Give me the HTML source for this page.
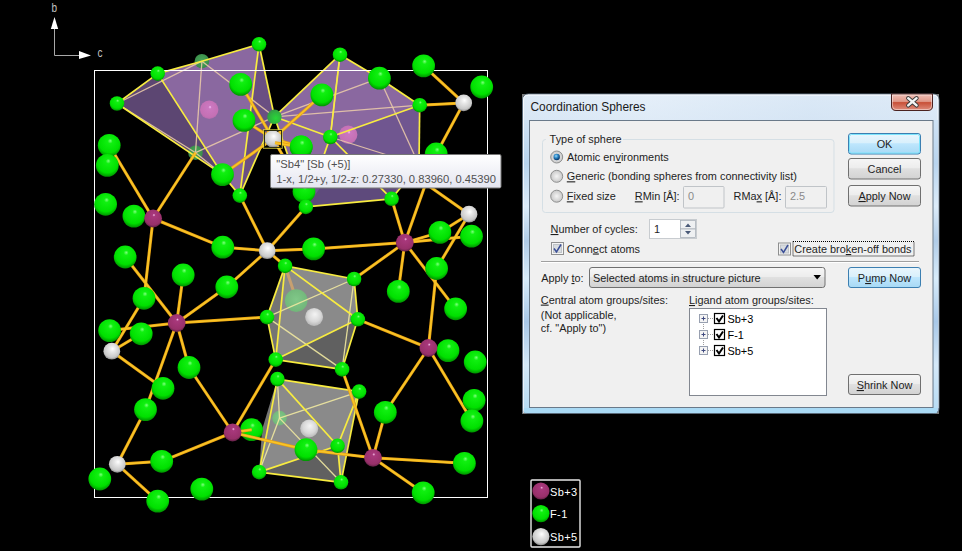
<!DOCTYPE html>
<html><head><meta charset="utf-8">
<style>
html,body{margin:0;padding:0;background:#000;overflow:hidden;width:962px;height:551px}
svg{display:block}
.t{font-family:"Liberation Sans",sans-serif;font-size:10.9px;fill:#1e1e1e}
</style></head><body>
<svg width="962" height="551" viewBox="0 0 962 551">
<defs>

<radialGradient id="gG" cx="0.5" cy="0.4" r="0.6" fx="0.55" fy="0.3">
 <stop offset="0" stop-color="#80ff80"/><stop offset="0.18" stop-color="#10f010"/>
 <stop offset="0.75" stop-color="#00e000"/><stop offset="1" stop-color="#009000"/></radialGradient>
<radialGradient id="gM" cx="0.5" cy="0.4" r="0.6" fx="0.55" fy="0.3">
 <stop offset="0" stop-color="#f8c0e8"/><stop offset="0.14" stop-color="#a8387c"/>
 <stop offset="0.8" stop-color="#98306a"/><stop offset="1" stop-color="#602044"/></radialGradient>
<radialGradient id="gW" cx="0.5" cy="0.4" r="0.6" fx="0.55" fy="0.35">
 <stop offset="0" stop-color="#ffffff"/><stop offset="0.3" stop-color="#e8e8e8"/>
 <stop offset="0.8" stop-color="#c8c8c8"/><stop offset="1" stop-color="#888888"/></radialGradient>
<radialGradient id="gT" cx="0.5" cy="0.45" r="0.6">
 <stop offset="0" stop-color="#48a858"/><stop offset="1" stop-color="#388848"/></radialGradient>
<radialGradient id="gT3" cx="0.6" cy="0.6" r="0.7">
 <stop offset="0" stop-color="#28d838"/><stop offset="0.6" stop-color="#30b040"/><stop offset="1" stop-color="#3a8a48"/></radialGradient>
<radialGradient id="gTG" cx="0.5" cy="0.45" r="0.6">
 <stop offset="0" stop-color="#80c888"/><stop offset="1" stop-color="#70b478"/></radialGradient>
<radialGradient id="gP" cx="0.5" cy="0.45" r="0.6" fx="0.55" fy="0.35">
 <stop offset="0" stop-color="#f8c0f8"/><stop offset="0.15" stop-color="#cc78c0"/><stop offset="0.8" stop-color="#c470b4"/><stop offset="1" stop-color="#a868a8"/></radialGradient>
<radialGradient id="gWI" cx="0.5" cy="0.45" r="0.6" fx="0.55" fy="0.35">
 <stop offset="0" stop-color="#f4f4f4"/><stop offset="0.6" stop-color="#d8d8d8"/><stop offset="1" stop-color="#b0b0b0"/></radialGradient>

<linearGradient id="frame" x1="0" y1="0" x2="0" y2="1">
 <stop offset="0" stop-color="#e6f0fa"/><stop offset="0.1" stop-color="#d4e4f4"/><stop offset="0.5" stop-color="#c6dcf2"/><stop offset="1" stop-color="#b4d2ee"/></linearGradient>
<linearGradient id="titleg" x1="0" y1="0" x2="1" y2="0">
 <stop offset="0" stop-color="#d8e6f4"/><stop offset="0.3" stop-color="#e4eef8"/><stop offset="0.7" stop-color="#d4e4f4"/><stop offset="1" stop-color="#dae8f6"/></linearGradient>
<linearGradient id="closeg" x1="0" y1="0" x2="0" y2="1">
 <stop offset="0" stop-color="#f0c0b8"/><stop offset="0.45" stop-color="#e09888"/><stop offset="0.52" stop-color="#c85038"/><stop offset="1" stop-color="#e09080"/></linearGradient>
<linearGradient id="btng" x1="0" y1="0" x2="0" y2="1">
 <stop offset="0" stop-color="#f6f6f6"/><stop offset="0.45" stop-color="#ededed"/><stop offset="0.5" stop-color="#e0e0e0"/><stop offset="1" stop-color="#d2d2d2"/></linearGradient>
<linearGradient id="btnb" x1="0" y1="0" x2="0" y2="1">
 <stop offset="0" stop-color="#eaf6fd"/><stop offset="0.45" stop-color="#d9f0fc"/><stop offset="0.5" stop-color="#bee6fd"/><stop offset="1" stop-color="#a7d9f5"/></linearGradient>
<linearGradient id="tipg" x1="0" y1="0" x2="0" y2="1">
 <stop offset="0" stop-color="#ffffff"/><stop offset="1" stop-color="#e4e5f0"/></linearGradient>
<linearGradient id="streak" x1="0" y1="0" x2="0" y2="1">
 <stop offset="0" stop-color="#cfe2f4"/><stop offset="0.15" stop-color="#b8d4ee"/><stop offset="0.3" stop-color="#dcecfa"/><stop offset="0.42" stop-color="#b0cce8"/><stop offset="0.55" stop-color="#d8ecfa"/><stop offset="0.7" stop-color="#a8c8e8"/><stop offset="0.85" stop-color="#d4e8f8"/><stop offset="1" stop-color="#b8dcf4"/></linearGradient>
<radialGradient id="radiog" cx="0.5" cy="0.5" r="0.5">
 <stop offset="0" stop-color="#f4f4f4"/><stop offset="1" stop-color="#c8c8c8"/></radialGradient>
<radialGradient id="radiosel" cx="0.4" cy="0.35" r="0.6">
 <stop offset="0" stop-color="#9fd8f8"/><stop offset="0.5" stop-color="#2a88c8"/><stop offset="1" stop-color="#0c3c70"/></radialGradient>
</defs>
<rect width="962" height="551" fill="#000"/>

<line x1="54.5" y1="55.5" x2="54.5" y2="22" stroke="#a8a8a8" stroke-width="1"/>
<line x1="54.5" y1="55.5" x2="84" y2="55.5" stroke="#a8a8a8" stroke-width="1"/>
<polygon points="54.5,17 50.8,29 58.2,29" fill="#ffffff"/>
<polygon points="91,55.5 79,51 79,59" fill="#ffffff"/>
<text x="0" y="0" font-family="Liberation Sans" font-size="12.5" fill="#c0c0c0" transform="translate(51.6,12.2) scale(0.8,1)">b</text>
<text x="0" y="0" font-family="Liberation Sans" font-size="12.5" fill="#c0c0c0" transform="translate(97.6,56.6) scale(0.8,1)">c</text>

<polygon points="117,103.5 157.7,73.6 201.9,61.2 259,44.3 274.4,116.8 239.8,195.6 222.5,174.6" fill="#8a68a0" fill-opacity="1"/><polygon points="117,103.5 157.7,73.6 222.5,174.6" fill="#5c4672" fill-opacity="1"/><polygon points="259,44.3 274.4,116.8 239.8,195.6" fill="#6a4f82" fill-opacity="1"/><polygon points="274.4,116.8 340,54.7 379.4,78.2 419.7,105.2 419,165 391.6,198.8 305.8,206.9" fill="#8a68a0" fill-opacity="1"/><polygon points="330.3,137 419.7,105.2 419,165 391.6,198.8 305.8,206.9" fill="#705690" fill-opacity="1"/><polygon points="305.8,206.9 391.6,198.8 400,182 330,175" fill="#5e4a7c" fill-opacity="1"/><polygon points="285.1,265.9 354.1,279 357.8,319.3 342.1,369.4 275.7,359.6 267,317.1" fill="#8a8a8a" fill-opacity="1"/><polygon points="275.7,359.6 342.1,369.4 357.8,319.3" fill="#606060" fill-opacity="1"/><polygon points="285.1,265.9 267,317.1 275.7,359.6" fill="#747474" fill-opacity="1"/><polygon points="277.4,379.1 359.1,391.6 341,482.3 259.1,472.1" fill="#8a8a8a" fill-opacity="1"/><polygon points="259.1,472.1 341,482.3 337.6,445.8" fill="#606060" fill-opacity="1"/><polygon points="277.4,379.1 259.1,472.1 262,430" fill="#747474" fill-opacity="1"/><circle cx="209.2" cy="109.7" r="9.2" fill="url(#gP)"/><circle cx="348.2" cy="134.8" r="9.2" fill="url(#gP)"/><circle cx="314.1" cy="316.9" r="9" fill="url(#gWI)"/><circle cx="309.2" cy="428.5" r="9" fill="url(#gWI)"/><line x1="285.1" y1="265.9" x2="296.4" y2="299.7" stroke="#c8a070" stroke-width="3" stroke-opacity="1"/><circle cx="201.9" cy="61.2" r="7.3" fill="url(#gT)"/><circle cx="195.5" cy="152.7" r="7.3" fill="url(#gT)"/><circle cx="296.2" cy="300.6" r="11.3" fill="url(#gTG)"/><circle cx="279.5" cy="418.1" r="7.3" fill="url(#gTG)"/><line x1="117" y1="103.5" x2="201.9" y2="61.2" stroke="#e8c8a8" stroke-width="1.3" stroke-opacity="0.9"/><line x1="201.9" y1="61.2" x2="195.5" y2="152.7" stroke="#e8c8a8" stroke-width="1.3" stroke-opacity="0.9"/><line x1="201.9" y1="61.2" x2="274.4" y2="116.8" stroke="#e8c8a8" stroke-width="1.3" stroke-opacity="0.9"/><line x1="195.5" y1="152.7" x2="274.4" y2="116.8" stroke="#e8c8a8" stroke-width="1.3" stroke-opacity="0.9"/><line x1="195.5" y1="152.7" x2="222.5" y2="174.6" stroke="#e8c8a8" stroke-width="1.3" stroke-opacity="0.9"/><line x1="117" y1="103.5" x2="195.5" y2="152.7" stroke="#e8c8a8" stroke-width="1.3" stroke-opacity="0.9"/><line x1="117" y1="103.5" x2="157.7" y2="73.6" stroke="#f8ec40" stroke-width="1.7" stroke-opacity="1"/><line x1="157.7" y1="73.6" x2="201.9" y2="61.2" stroke="#f8ec40" stroke-width="1.7" stroke-opacity="1"/><line x1="201.9" y1="61.2" x2="259" y2="44.3" stroke="#f8ec40" stroke-width="1.7" stroke-opacity="1"/><line x1="157.7" y1="73.6" x2="222.5" y2="174.6" stroke="#f8ec40" stroke-width="1.7" stroke-opacity="1"/><line x1="117" y1="103.5" x2="222.5" y2="174.6" stroke="#f8ec40" stroke-width="1.7" stroke-opacity="1"/><line x1="259" y1="44.3" x2="274.4" y2="116.8" stroke="#f8ec40" stroke-width="1.7" stroke-opacity="1"/><line x1="259" y1="44.3" x2="239.8" y2="195.6" stroke="#f8ec40" stroke-width="1.7" stroke-opacity="1"/><line x1="222.5" y1="174.6" x2="239.8" y2="195.6" stroke="#f8ec40" stroke-width="1.7" stroke-opacity="1"/><line x1="274.4" y1="116.8" x2="239.8" y2="195.6" stroke="#f8ec40" stroke-width="1.7" stroke-opacity="1"/><line x1="274.4" y1="116.8" x2="379.4" y2="78.2" stroke="#e8c8a8" stroke-width="1.3" stroke-opacity="0.9"/><line x1="340" y1="54.7" x2="330.3" y2="137" stroke="#e8c8a8" stroke-width="1.3" stroke-opacity="0.9"/><line x1="330.3" y1="137" x2="419" y2="165" stroke="#e8c8a8" stroke-width="1.3" stroke-opacity="0.9"/><line x1="379.4" y1="78.2" x2="419" y2="165" stroke="#e8c8a8" stroke-width="1.3" stroke-opacity="0.9"/><line x1="274.4" y1="116.8" x2="419.7" y2="105.2" stroke="#e8c8a8" stroke-width="1.3" stroke-opacity="0.9"/><line x1="274.4" y1="116.8" x2="340" y2="54.7" stroke="#f8ec40" stroke-width="1.7" stroke-opacity="1"/><line x1="340" y1="54.7" x2="379.4" y2="78.2" stroke="#f8ec40" stroke-width="1.7" stroke-opacity="1"/><line x1="379.4" y1="78.2" x2="419.7" y2="105.2" stroke="#f8ec40" stroke-width="1.7" stroke-opacity="1"/><line x1="419.7" y1="105.2" x2="419" y2="165" stroke="#f8ec40" stroke-width="1.7" stroke-opacity="1"/><line x1="419" y1="165" x2="391.6" y2="198.8" stroke="#f8ec40" stroke-width="1.7" stroke-opacity="1"/><line x1="391.6" y1="198.8" x2="305.8" y2="206.9" stroke="#f8ec40" stroke-width="1.7" stroke-opacity="1"/><line x1="305.8" y1="206.9" x2="274.4" y2="116.8" stroke="#f8ec40" stroke-width="1.7" stroke-opacity="1"/><line x1="330.3" y1="137" x2="274.4" y2="116.8" stroke="#f8ec40" stroke-width="1.7" stroke-opacity="1"/><line x1="330.3" y1="137" x2="419.7" y2="105.2" stroke="#f8ec40" stroke-width="1.7" stroke-opacity="1"/><line x1="330.3" y1="137" x2="305.8" y2="206.9" stroke="#f8ec40" stroke-width="1.7" stroke-opacity="1"/><line x1="330.3" y1="137" x2="391.6" y2="198.8" stroke="#f8ec40" stroke-width="1.7" stroke-opacity="1"/><line x1="340" y1="54.7" x2="330.3" y2="137" stroke="#f8ec40" stroke-width="1.7" stroke-opacity="1"/><line x1="267" y1="317.1" x2="354.1" y2="279" stroke="#f0e8a0" stroke-width="1.3" stroke-opacity="0.9"/><line x1="267" y1="317.1" x2="342.1" y2="369.4" stroke="#f0e8a0" stroke-width="1.3" stroke-opacity="0.9"/><line x1="354.1" y1="279" x2="342.1" y2="369.4" stroke="#f0e8a0" stroke-width="1.3" stroke-opacity="0.9"/><line x1="285.1" y1="265.9" x2="354.1" y2="279" stroke="#f8ec40" stroke-width="1.7" stroke-opacity="1"/><line x1="354.1" y1="279" x2="357.8" y2="319.3" stroke="#f8ec40" stroke-width="1.7" stroke-opacity="1"/><line x1="357.8" y1="319.3" x2="342.1" y2="369.4" stroke="#f8ec40" stroke-width="1.7" stroke-opacity="1"/><line x1="342.1" y1="369.4" x2="275.7" y2="359.6" stroke="#f8ec40" stroke-width="1.7" stroke-opacity="1"/><line x1="275.7" y1="359.6" x2="267" y2="317.1" stroke="#f8ec40" stroke-width="1.7" stroke-opacity="1"/><line x1="267" y1="317.1" x2="285.1" y2="265.9" stroke="#f8ec40" stroke-width="1.7" stroke-opacity="1"/><line x1="285.1" y1="265.9" x2="357.8" y2="319.3" stroke="#f8ec40" stroke-width="1.7" stroke-opacity="1"/><line x1="357.8" y1="319.3" x2="275.7" y2="359.6" stroke="#f8ec40" stroke-width="1.7" stroke-opacity="1"/><line x1="285.1" y1="265.9" x2="275.7" y2="359.6" stroke="#f8ec40" stroke-width="1.7" stroke-opacity="1"/><line x1="279.5" y1="418.1" x2="359.1" y2="391.6" stroke="#f0e8a0" stroke-width="1.3" stroke-opacity="0.9"/><line x1="279.5" y1="418.1" x2="341" y2="482.3" stroke="#f0e8a0" stroke-width="1.3" stroke-opacity="0.9"/><line x1="279.5" y1="418.1" x2="277.4" y2="379.1" stroke="#f0e8a0" stroke-width="1.3" stroke-opacity="0.9"/><line x1="279.5" y1="418.1" x2="259.1" y2="472.1" stroke="#f0e8a0" stroke-width="1.3" stroke-opacity="0.9"/><line x1="277.4" y1="379.1" x2="359.1" y2="391.6" stroke="#f8ec40" stroke-width="1.7" stroke-opacity="1"/><line x1="359.1" y1="391.6" x2="341" y2="482.3" stroke="#f8ec40" stroke-width="1.7" stroke-opacity="1"/><line x1="341" y1="482.3" x2="259.1" y2="472.1" stroke="#f8ec40" stroke-width="1.7" stroke-opacity="1"/><line x1="259.1" y1="472.1" x2="277.4" y2="379.1" stroke="#f8ec40" stroke-width="1.7" stroke-opacity="1"/><line x1="277.4" y1="379.1" x2="337.6" y2="445.8" stroke="#f8ec40" stroke-width="1.7" stroke-opacity="1"/><line x1="337.6" y1="445.8" x2="259.1" y2="472.1" stroke="#f8ec40" stroke-width="1.7" stroke-opacity="1"/><line x1="337.6" y1="445.8" x2="359.1" y2="391.6" stroke="#f8ec40" stroke-width="1.7" stroke-opacity="1"/><line x1="337.6" y1="445.8" x2="341" y2="482.3" stroke="#f8ec40" stroke-width="1.7" stroke-opacity="1"/><circle cx="274.4" cy="116.8" r="7.3" fill="url(#gT3)"/><rect x="94.5" y="70.5" width="393" height="427" fill="none" stroke="#ffffff" stroke-width="1"/><circle cx="251.6" cy="429.7" r="11.4" fill="url(#gG)"/><line x1="273" y1="138.8" x2="240.7" y2="84.4" stroke="#e8a010" stroke-width="3.0" stroke-opacity="1"/><line x1="273" y1="138.8" x2="244" y2="120.4" stroke="#e8a010" stroke-width="3.0" stroke-opacity="1"/><line x1="273" y1="138.8" x2="321.9" y2="94.9" stroke="#e8a010" stroke-width="3.0" stroke-opacity="1"/><line x1="273" y1="138.8" x2="301.2" y2="147" stroke="#e8a010" stroke-width="3.0" stroke-opacity="1"/><line x1="273" y1="138.8" x2="222.5" y2="174.6" stroke="#e8a010" stroke-width="3.0" stroke-opacity="1"/><line x1="273" y1="138.8" x2="304" y2="191.5" stroke="#e8a010" stroke-width="3.0" stroke-opacity="1"/><line x1="153.1" y1="218.5" x2="109.2" y2="145.3" stroke="#e8a010" stroke-width="3.0" stroke-opacity="1"/><line x1="153.1" y1="218.5" x2="195.5" y2="152.7" stroke="#e8a010" stroke-width="3.0" stroke-opacity="1"/><line x1="153.1" y1="218.5" x2="222.8" y2="247.2" stroke="#e8a010" stroke-width="3.0" stroke-opacity="1"/><line x1="153.1" y1="218.5" x2="144" y2="298.3" stroke="#e8a010" stroke-width="3.0" stroke-opacity="1"/><line x1="153.1" y1="218.5" x2="133.9" y2="216.1" stroke="#e8a010" stroke-width="3.0" stroke-opacity="1"/><line x1="267.2" y1="250.7" x2="222.8" y2="247.2" stroke="#e8a010" stroke-width="3.0" stroke-opacity="1"/><line x1="267.2" y1="250.7" x2="313.6" y2="248.9" stroke="#e8a010" stroke-width="3.0" stroke-opacity="1"/><line x1="267.2" y1="250.7" x2="239.8" y2="195.6" stroke="#e8a010" stroke-width="3.0" stroke-opacity="1"/><line x1="267.2" y1="250.7" x2="305.8" y2="206.9" stroke="#e8a010" stroke-width="3.0" stroke-opacity="1"/><line x1="267.2" y1="250.7" x2="285.1" y2="265.9" stroke="#e8a010" stroke-width="3.0" stroke-opacity="1"/><line x1="267.2" y1="250.7" x2="226.8" y2="287" stroke="#e8a010" stroke-width="3.0" stroke-opacity="1"/><line x1="176.7" y1="323" x2="125.2" y2="257" stroke="#e8a010" stroke-width="3.0" stroke-opacity="1"/><line x1="176.7" y1="323" x2="183.2" y2="275" stroke="#e8a010" stroke-width="3.0" stroke-opacity="1"/><line x1="176.7" y1="323" x2="226.8" y2="287" stroke="#e8a010" stroke-width="3.0" stroke-opacity="1"/><line x1="176.7" y1="323" x2="109.6" y2="330.6" stroke="#e8a010" stroke-width="3.0" stroke-opacity="1"/><line x1="176.7" y1="323" x2="145.5" y2="409.6" stroke="#e8a010" stroke-width="3.0" stroke-opacity="1"/><line x1="176.7" y1="323" x2="189" y2="367.5" stroke="#e8a010" stroke-width="3.0" stroke-opacity="1"/><line x1="176.7" y1="323" x2="267" y2="317.1" stroke="#e8a010" stroke-width="3.0" stroke-opacity="1"/><line x1="111.8" y1="351.2" x2="144" y2="298.3" stroke="#e8a010" stroke-width="3.0" stroke-opacity="1"/><line x1="111.8" y1="351.2" x2="141.2" y2="333.8" stroke="#e8a010" stroke-width="3.0" stroke-opacity="1"/><line x1="111.8" y1="351.2" x2="163" y2="388.3" stroke="#e8a010" stroke-width="3.0" stroke-opacity="1"/><line x1="117.3" y1="464.3" x2="145.5" y2="409.6" stroke="#e8a010" stroke-width="3.0" stroke-opacity="1"/><line x1="117.3" y1="464.3" x2="161.7" y2="461.3" stroke="#e8a010" stroke-width="3.0" stroke-opacity="1"/><line x1="117.3" y1="464.3" x2="157.7" y2="501.1" stroke="#e8a010" stroke-width="3.0" stroke-opacity="1"/><line x1="232.6" y1="432.5" x2="189" y2="367.5" stroke="#e8a010" stroke-width="3.0" stroke-opacity="1"/><line x1="232.6" y1="432.5" x2="161.7" y2="461.3" stroke="#e8a010" stroke-width="3.0" stroke-opacity="1"/><line x1="232.6" y1="432.5" x2="275.7" y2="359.6" stroke="#e8a010" stroke-width="3.0" stroke-opacity="1"/><line x1="232.6" y1="432.5" x2="251.6" y2="429.7" stroke="#e8a010" stroke-width="3.0" stroke-opacity="1"/><line x1="232.6" y1="432.5" x2="306" y2="449.7" stroke="#e8a010" stroke-width="3.0" stroke-opacity="1"/><line x1="373" y1="457.8" x2="306" y2="449.7" stroke="#e8a010" stroke-width="3.0" stroke-opacity="1"/><line x1="373" y1="457.8" x2="385.3" y2="412.3" stroke="#e8a010" stroke-width="3.0" stroke-opacity="1"/><line x1="373" y1="457.8" x2="342.1" y2="369.4" stroke="#e8a010" stroke-width="3.0" stroke-opacity="1"/><line x1="373" y1="457.8" x2="464.4" y2="463.3" stroke="#e8a010" stroke-width="3.0" stroke-opacity="1"/><line x1="373" y1="457.8" x2="423.2" y2="492.8" stroke="#e8a010" stroke-width="3.0" stroke-opacity="1"/><line x1="428.4" y1="348" x2="385.3" y2="412.3" stroke="#e8a010" stroke-width="3.0" stroke-opacity="1"/><line x1="428.4" y1="348" x2="471.9" y2="421" stroke="#e8a010" stroke-width="3.0" stroke-opacity="1"/><line x1="428.4" y1="348" x2="436.6" y2="268.5" stroke="#e8a010" stroke-width="3.0" stroke-opacity="1"/><line x1="428.4" y1="348" x2="357.8" y2="319.3" stroke="#e8a010" stroke-width="3.0" stroke-opacity="1"/><line x1="428.4" y1="348" x2="448" y2="350.6" stroke="#e8a010" stroke-width="3.0" stroke-opacity="1"/><line x1="404.8" y1="242.6" x2="354.1" y2="279" stroke="#e8a010" stroke-width="3.0" stroke-opacity="1"/><line x1="404.8" y1="242.6" x2="398.3" y2="291.4" stroke="#e8a010" stroke-width="3.0" stroke-opacity="1"/><line x1="404.8" y1="242.6" x2="455.6" y2="308.8" stroke="#e8a010" stroke-width="3.0" stroke-opacity="1"/><line x1="404.8" y1="242.6" x2="313.6" y2="248.9" stroke="#e8a010" stroke-width="3.0" stroke-opacity="1"/><line x1="404.8" y1="242.6" x2="391.6" y2="198.8" stroke="#e8a010" stroke-width="3.0" stroke-opacity="1"/><line x1="404.8" y1="242.6" x2="436.2" y2="154" stroke="#e8a010" stroke-width="3.0" stroke-opacity="1"/><line x1="404.8" y1="242.6" x2="439.9" y2="232.4" stroke="#e8a010" stroke-width="3.0" stroke-opacity="1"/><line x1="404.8" y1="242.6" x2="471.5" y2="236.2" stroke="#e8a010" stroke-width="3.0" stroke-opacity="1"/><line x1="469" y1="214.2" x2="436.6" y2="268.5" stroke="#e8a010" stroke-width="3.0" stroke-opacity="1"/><line x1="469" y1="214.2" x2="439.9" y2="232.4" stroke="#e8a010" stroke-width="3.0" stroke-opacity="1"/><line x1="469" y1="214.2" x2="392" y2="160" stroke="#e8a010" stroke-width="3.0" stroke-opacity="1"/><line x1="463.7" y1="102.9" x2="423.6" y2="65.9" stroke="#e8a010" stroke-width="3.0" stroke-opacity="1"/><line x1="463.7" y1="102.9" x2="419.7" y2="105.2" stroke="#e8a010" stroke-width="3.0" stroke-opacity="1"/><line x1="463.7" y1="102.9" x2="436.2" y2="154" stroke="#e8a010" stroke-width="3.0" stroke-opacity="1"/><line x1="273" y1="138.8" x2="240.7" y2="84.4" stroke="#f8c428" stroke-width="1.7" stroke-opacity="1"/><line x1="273" y1="138.8" x2="244" y2="120.4" stroke="#f8c428" stroke-width="1.7" stroke-opacity="1"/><line x1="273" y1="138.8" x2="321.9" y2="94.9" stroke="#f8c428" stroke-width="1.7" stroke-opacity="1"/><line x1="273" y1="138.8" x2="301.2" y2="147" stroke="#f8c428" stroke-width="1.7" stroke-opacity="1"/><line x1="273" y1="138.8" x2="222.5" y2="174.6" stroke="#f8c428" stroke-width="1.7" stroke-opacity="1"/><line x1="273" y1="138.8" x2="304" y2="191.5" stroke="#f8c428" stroke-width="1.7" stroke-opacity="1"/><line x1="153.1" y1="218.5" x2="109.2" y2="145.3" stroke="#f8c428" stroke-width="1.7" stroke-opacity="1"/><line x1="153.1" y1="218.5" x2="195.5" y2="152.7" stroke="#f8c428" stroke-width="1.7" stroke-opacity="1"/><line x1="153.1" y1="218.5" x2="222.8" y2="247.2" stroke="#f8c428" stroke-width="1.7" stroke-opacity="1"/><line x1="153.1" y1="218.5" x2="144" y2="298.3" stroke="#f8c428" stroke-width="1.7" stroke-opacity="1"/><line x1="153.1" y1="218.5" x2="133.9" y2="216.1" stroke="#f8c428" stroke-width="1.7" stroke-opacity="1"/><line x1="267.2" y1="250.7" x2="222.8" y2="247.2" stroke="#f8c428" stroke-width="1.7" stroke-opacity="1"/><line x1="267.2" y1="250.7" x2="313.6" y2="248.9" stroke="#f8c428" stroke-width="1.7" stroke-opacity="1"/><line x1="267.2" y1="250.7" x2="239.8" y2="195.6" stroke="#f8c428" stroke-width="1.7" stroke-opacity="1"/><line x1="267.2" y1="250.7" x2="305.8" y2="206.9" stroke="#f8c428" stroke-width="1.7" stroke-opacity="1"/><line x1="267.2" y1="250.7" x2="285.1" y2="265.9" stroke="#f8c428" stroke-width="1.7" stroke-opacity="1"/><line x1="267.2" y1="250.7" x2="226.8" y2="287" stroke="#f8c428" stroke-width="1.7" stroke-opacity="1"/><line x1="176.7" y1="323" x2="125.2" y2="257" stroke="#f8c428" stroke-width="1.7" stroke-opacity="1"/><line x1="176.7" y1="323" x2="183.2" y2="275" stroke="#f8c428" stroke-width="1.7" stroke-opacity="1"/><line x1="176.7" y1="323" x2="226.8" y2="287" stroke="#f8c428" stroke-width="1.7" stroke-opacity="1"/><line x1="176.7" y1="323" x2="109.6" y2="330.6" stroke="#f8c428" stroke-width="1.7" stroke-opacity="1"/><line x1="176.7" y1="323" x2="145.5" y2="409.6" stroke="#f8c428" stroke-width="1.7" stroke-opacity="1"/><line x1="176.7" y1="323" x2="189" y2="367.5" stroke="#f8c428" stroke-width="1.7" stroke-opacity="1"/><line x1="176.7" y1="323" x2="267" y2="317.1" stroke="#f8c428" stroke-width="1.7" stroke-opacity="1"/><line x1="111.8" y1="351.2" x2="144" y2="298.3" stroke="#f8c428" stroke-width="1.7" stroke-opacity="1"/><line x1="111.8" y1="351.2" x2="141.2" y2="333.8" stroke="#f8c428" stroke-width="1.7" stroke-opacity="1"/><line x1="111.8" y1="351.2" x2="163" y2="388.3" stroke="#f8c428" stroke-width="1.7" stroke-opacity="1"/><line x1="117.3" y1="464.3" x2="145.5" y2="409.6" stroke="#f8c428" stroke-width="1.7" stroke-opacity="1"/><line x1="117.3" y1="464.3" x2="161.7" y2="461.3" stroke="#f8c428" stroke-width="1.7" stroke-opacity="1"/><line x1="117.3" y1="464.3" x2="157.7" y2="501.1" stroke="#f8c428" stroke-width="1.7" stroke-opacity="1"/><line x1="232.6" y1="432.5" x2="189" y2="367.5" stroke="#f8c428" stroke-width="1.7" stroke-opacity="1"/><line x1="232.6" y1="432.5" x2="161.7" y2="461.3" stroke="#f8c428" stroke-width="1.7" stroke-opacity="1"/><line x1="232.6" y1="432.5" x2="275.7" y2="359.6" stroke="#f8c428" stroke-width="1.7" stroke-opacity="1"/><line x1="232.6" y1="432.5" x2="251.6" y2="429.7" stroke="#f8c428" stroke-width="1.7" stroke-opacity="1"/><line x1="232.6" y1="432.5" x2="306" y2="449.7" stroke="#f8c428" stroke-width="1.7" stroke-opacity="1"/><line x1="373" y1="457.8" x2="306" y2="449.7" stroke="#f8c428" stroke-width="1.7" stroke-opacity="1"/><line x1="373" y1="457.8" x2="385.3" y2="412.3" stroke="#f8c428" stroke-width="1.7" stroke-opacity="1"/><line x1="373" y1="457.8" x2="342.1" y2="369.4" stroke="#f8c428" stroke-width="1.7" stroke-opacity="1"/><line x1="373" y1="457.8" x2="464.4" y2="463.3" stroke="#f8c428" stroke-width="1.7" stroke-opacity="1"/><line x1="373" y1="457.8" x2="423.2" y2="492.8" stroke="#f8c428" stroke-width="1.7" stroke-opacity="1"/><line x1="428.4" y1="348" x2="385.3" y2="412.3" stroke="#f8c428" stroke-width="1.7" stroke-opacity="1"/><line x1="428.4" y1="348" x2="471.9" y2="421" stroke="#f8c428" stroke-width="1.7" stroke-opacity="1"/><line x1="428.4" y1="348" x2="436.6" y2="268.5" stroke="#f8c428" stroke-width="1.7" stroke-opacity="1"/><line x1="428.4" y1="348" x2="357.8" y2="319.3" stroke="#f8c428" stroke-width="1.7" stroke-opacity="1"/><line x1="428.4" y1="348" x2="448" y2="350.6" stroke="#f8c428" stroke-width="1.7" stroke-opacity="1"/><line x1="404.8" y1="242.6" x2="354.1" y2="279" stroke="#f8c428" stroke-width="1.7" stroke-opacity="1"/><line x1="404.8" y1="242.6" x2="398.3" y2="291.4" stroke="#f8c428" stroke-width="1.7" stroke-opacity="1"/><line x1="404.8" y1="242.6" x2="455.6" y2="308.8" stroke="#f8c428" stroke-width="1.7" stroke-opacity="1"/><line x1="404.8" y1="242.6" x2="313.6" y2="248.9" stroke="#f8c428" stroke-width="1.7" stroke-opacity="1"/><line x1="404.8" y1="242.6" x2="391.6" y2="198.8" stroke="#f8c428" stroke-width="1.7" stroke-opacity="1"/><line x1="404.8" y1="242.6" x2="436.2" y2="154" stroke="#f8c428" stroke-width="1.7" stroke-opacity="1"/><line x1="404.8" y1="242.6" x2="439.9" y2="232.4" stroke="#f8c428" stroke-width="1.7" stroke-opacity="1"/><line x1="404.8" y1="242.6" x2="471.5" y2="236.2" stroke="#f8c428" stroke-width="1.7" stroke-opacity="1"/><line x1="469" y1="214.2" x2="436.6" y2="268.5" stroke="#f8c428" stroke-width="1.7" stroke-opacity="1"/><line x1="469" y1="214.2" x2="439.9" y2="232.4" stroke="#f8c428" stroke-width="1.7" stroke-opacity="1"/><line x1="469" y1="214.2" x2="392" y2="160" stroke="#f8c428" stroke-width="1.7" stroke-opacity="1"/><line x1="463.7" y1="102.9" x2="423.6" y2="65.9" stroke="#f8c428" stroke-width="1.7" stroke-opacity="1"/><line x1="463.7" y1="102.9" x2="419.7" y2="105.2" stroke="#f8c428" stroke-width="1.7" stroke-opacity="1"/><line x1="463.7" y1="102.9" x2="436.2" y2="154" stroke="#f8c428" stroke-width="1.7" stroke-opacity="1"/><circle cx="109.2" cy="145.3" r="11.4" fill="url(#gG)"/><circle cx="107.3" cy="165.4" r="11.4" fill="url(#gG)"/><circle cx="105.6" cy="204.3" r="11.4" fill="url(#gG)"/><circle cx="133.9" cy="216.1" r="11.4" fill="url(#gG)"/><circle cx="125.2" cy="257" r="11.4" fill="url(#gG)"/><circle cx="183.2" cy="275" r="11.4" fill="url(#gG)"/><circle cx="226.8" cy="287" r="11.4" fill="url(#gG)"/><circle cx="144" cy="298.3" r="11.4" fill="url(#gG)"/><circle cx="109.6" cy="330.6" r="11.4" fill="url(#gG)"/><circle cx="141.2" cy="333.8" r="11.4" fill="url(#gG)"/><circle cx="189" cy="367.5" r="11.4" fill="url(#gG)"/><circle cx="163" cy="388.3" r="11.4" fill="url(#gG)"/><circle cx="145.5" cy="409.6" r="11.4" fill="url(#gG)"/><circle cx="161.7" cy="461.3" r="11.4" fill="url(#gG)"/><circle cx="99.8" cy="479" r="11.4" fill="url(#gG)"/><circle cx="157.7" cy="501.1" r="11.4" fill="url(#gG)"/><circle cx="201.8" cy="489.1" r="11.4" fill="url(#gG)"/><circle cx="306" cy="449.7" r="11.4" fill="url(#gG)"/><circle cx="385.3" cy="412.3" r="11.4" fill="url(#gG)"/><circle cx="474.1" cy="400.3" r="11.4" fill="url(#gG)"/><circle cx="471.9" cy="421" r="11.4" fill="url(#gG)"/><circle cx="464.4" cy="463.3" r="11.4" fill="url(#gG)"/><circle cx="423.2" cy="492.8" r="11.4" fill="url(#gG)"/><circle cx="436.6" cy="268.5" r="11.4" fill="url(#gG)"/><circle cx="398.3" cy="291.4" r="11.4" fill="url(#gG)"/><circle cx="455.6" cy="308.8" r="11.4" fill="url(#gG)"/><circle cx="448" cy="350.6" r="11.4" fill="url(#gG)"/><circle cx="475.2" cy="362" r="11.4" fill="url(#gG)"/><circle cx="439.9" cy="232.4" r="11.4" fill="url(#gG)"/><circle cx="471.5" cy="236.2" r="11.4" fill="url(#gG)"/><circle cx="436.2" cy="154" r="11.4" fill="url(#gG)"/><circle cx="304" cy="191.5" r="11.4" fill="url(#gG)"/><circle cx="313.6" cy="248.9" r="11.4" fill="url(#gG)"/><circle cx="222.8" cy="247.2" r="11.4" fill="url(#gG)"/><circle cx="222.5" cy="174.6" r="11.4" fill="url(#gG)"/><circle cx="240.7" cy="84.4" r="11.4" fill="url(#gG)"/><circle cx="244" cy="120.4" r="11.4" fill="url(#gG)"/><circle cx="321.9" cy="94.9" r="11.4" fill="url(#gG)"/><circle cx="301.2" cy="147" r="11.4" fill="url(#gG)"/><circle cx="379.4" cy="78.2" r="11.4" fill="url(#gG)"/><circle cx="423.6" cy="65.9" r="11.4" fill="url(#gG)"/><circle cx="481.7" cy="87" r="11.4" fill="url(#gG)"/><circle cx="117" cy="103.5" r="7.3" fill="url(#gG)"/><circle cx="157.7" cy="73.6" r="7.3" fill="url(#gG)"/><circle cx="259" cy="44.3" r="7.3" fill="url(#gG)"/><circle cx="239.8" cy="195.6" r="7.3" fill="url(#gG)"/><circle cx="340" cy="54.7" r="7.3" fill="url(#gG)"/><circle cx="419.7" cy="105.2" r="7.3" fill="url(#gG)"/><circle cx="330.3" cy="137" r="7.3" fill="url(#gG)"/><circle cx="391.6" cy="198.8" r="7.3" fill="url(#gG)"/><circle cx="305.8" cy="206.9" r="7.3" fill="url(#gG)"/><circle cx="285.1" cy="265.9" r="7.3" fill="url(#gG)"/><circle cx="354.1" cy="279" r="7.3" fill="url(#gG)"/><circle cx="357.8" cy="319.3" r="7.3" fill="url(#gG)"/><circle cx="342.1" cy="369.4" r="7.3" fill="url(#gG)"/><circle cx="275.7" cy="359.6" r="7.3" fill="url(#gG)"/><circle cx="267" cy="317.1" r="7.3" fill="url(#gG)"/><circle cx="277.4" cy="379.1" r="7.3" fill="url(#gG)"/><circle cx="359.1" cy="391.6" r="7.3" fill="url(#gG)"/><circle cx="337.6" cy="445.8" r="7.3" fill="url(#gG)"/><circle cx="341" cy="482.3" r="7.3" fill="url(#gG)"/><circle cx="259.1" cy="472.1" r="7.3" fill="url(#gG)"/><circle cx="153.1" cy="218.5" r="8.9" fill="url(#gM)"/><circle cx="176.7" cy="323" r="8.9" fill="url(#gM)"/><circle cx="232.6" cy="432.5" r="8.9" fill="url(#gM)"/><circle cx="404.8" cy="242.6" r="8.9" fill="url(#gM)"/><circle cx="428.4" cy="348" r="8.9" fill="url(#gM)"/><circle cx="373" cy="457.8" r="8.9" fill="url(#gM)"/><circle cx="273" cy="138.8" r="8.6" fill="url(#gW)"/><circle cx="463.7" cy="102.9" r="8.4" fill="url(#gW)"/><circle cx="267.2" cy="250.7" r="8.4" fill="url(#gW)"/><circle cx="469" cy="214.2" r="8.4" fill="url(#gW)"/><circle cx="111.8" cy="351.2" r="8.4" fill="url(#gW)"/><circle cx="117.3" cy="464.3" r="8.4" fill="url(#gW)"/><line x1="275.0" y1="142.8" x2="301.2" y2="147" stroke="#e8a010" stroke-width="3.0" stroke-opacity="1"/><line x1="275" y1="142.8" x2="301.2" y2="147" stroke="#f8c428" stroke-width="1.7" stroke-opacity="1"/><circle cx="301.2" cy="147" r="11.4" fill="url(#gG)"/><rect x="264.5" y="130.5" width="17" height="17" fill="none" stroke="#303010" stroke-width="1"/><rect x="263.5" y="129.5" width="19" height="19" fill="none" stroke="#e0d840" stroke-width="0.8" stroke-opacity="0.8"/>
<!-- tooltip -->
<rect x="270.5" y="154.5" width="230.5" height="33.5" fill="url(#tipg)" stroke="#767676" stroke-width="1" rx="1.5"/>
<text x="276.3" y="168.3" style="font-family:'Liberation Sans',sans-serif;font-size:11.2px;fill:#505050">"Sb4" [Sb (+5)]</text>
<text x="276.3" y="182.6" style="font-family:'Liberation Sans',sans-serif;font-size:11.2px;fill:#505050">1-x, 1/2+y, 1/2-z: 0.27330, 0.83960, 0.45390</text>

<rect x="531" y="480" width="49" height="67" fill="none" stroke="#e8e8e8" stroke-width="1.4" rx="1"/>
<circle cx="540.9" cy="491" r="8.6" fill="url(#gM)"/>
<circle cx="540.9" cy="513.6" r="8.6" fill="url(#gG)"/>
<circle cx="540.9" cy="536.6" r="8.6" fill="url(#gW)"/>
<text x="550" y="495.5" font-family="Liberation Sans" font-size="11" letter-spacing="0.4" fill="#ffffff">Sb+3</text>
<text x="550" y="518" font-family="Liberation Sans" font-size="11" letter-spacing="0.4" fill="#ffffff">F-1</text>
<text x="550" y="541" font-family="Liberation Sans" font-size="11" letter-spacing="0.4" fill="#ffffff">Sb+5</text>

<!-- dialog -->
<g id="dlg">
<path d="M522,94 L528,94 L522,100 Z M939,94 L933,94 L939,100 Z M522,414 L522,408 L528,414 Z M939,414 L939,408 L933,414 Z" fill="#7a7a7a"/>
<path d="M522.5,413.5 L522.5,100 Q522.5,94 528.5,94 L933,94 Q939,94 939,100 L939,408 Q939,413.5 933.5,413.5 L528,413.5 Q522.5,413.5 522.5,408 Z" fill="url(#frame)" stroke="#5a6a7a" stroke-width="1"/>
<rect x="524" y="96" width="413" height="24" fill="url(#titleg)" opacity="0.6"/>
<path d="M523.5,413 L523.5,100 Q523.5,95 528.5,95 L933,95 Q938,95 938,100 L938,408" fill="none" stroke="#ffffff" stroke-opacity="0.7" stroke-width="1"/>
<rect x="524" y="120" width="5" height="288" fill="url(#streak)"/>
<rect x="933.5" y="120" width="4.5" height="288" fill="url(#streak)"/>
<rect x="524" y="408" width="413" height="5" fill="#a8dcf6" opacity="0.8"/>
<text x="530.5" y="111" style="font-family:'Liberation Sans',sans-serif;font-size:11.9px;fill:#1a1a1a">Coordination Spheres</text>
<path d="M891.5,94 L932.5,94 L932.5,106 Q932.5,110.5 928,110.5 L896,110.5 Q891.5,110.5 891.5,106 Z" fill="url(#closeg)" stroke="#4a2220" stroke-width="1"/>
<path d="M892.5,95 L931.5,95 L931.5,106 Q931.5,109.5 928,109.5 L896,109.5 Q892.5,109.5 892.5,106 Z" fill="none" stroke="#ffffff" stroke-opacity="0.45" stroke-width="1"/>
<path d="M908.2,98.2 L916.6,105.4 M916.6,98.2 L908.2,105.4" stroke="#3a3a3a" stroke-width="4.2" stroke-linecap="round"/>
<path d="M908.2,98.2 L916.6,105.4 M916.6,98.2 L908.2,105.4" stroke="#f4f4f4" stroke-width="2.4" stroke-linecap="round"/>
<rect x="529.5" y="120.5" width="403.5" height="287" fill="#f0f0f0" stroke="#6a7a8a" stroke-width="1"/>
<!-- group box -->
<rect x="542.5" y="139.5" width="291.5" height="73" fill="none" stroke="#d5dfe5" stroke-width="1" rx="3"/>
<rect x="546" y="133" width="77" height="10" fill="#f0f0f0"/>
<text class="t" x="549.6" y="143">Type of sphere</text>
<circle cx="556.7" cy="157" r="6" fill="url(#radiog)" stroke="#8e8f8f" stroke-width="1"/>
<circle cx="556.7" cy="157" r="3.2" fill="url(#radiosel)"/>
<text class="t" x="567" y="161">Atomic en<tspan text-decoration="underline">v</tspan>ironments</text>
<circle cx="556.7" cy="176.3" r="6" fill="url(#radiog)" stroke="#8e8f8f" stroke-width="1"/>
<text class="t" x="566.8" y="180.3"><tspan text-decoration="underline">G</tspan>eneric (bonding spheres from connectivity list)</text>
<circle cx="556.7" cy="196.2" r="6" fill="url(#radiog)" stroke="#8e8f8f" stroke-width="1"/>
<text class="t" x="566.8" y="200.3"><tspan text-decoration="underline">F</tspan>ixed size</text>
<text class="t" x="634.8" y="200.3"><tspan text-decoration="underline">R</tspan>Min [Å]:</text>
<rect x="683.5" y="186.5" width="40.5" height="21.5" fill="#f0f0f0" stroke="#c0c4c8" stroke-width="1" rx="1"/>
<text class="t" x="688" y="200.3" style="fill:#8a8a8a">0</text>
<text class="t" x="733.6" y="200.3">RMa<tspan text-decoration="underline">x</tspan> [Å]:</text>
<rect x="785.5" y="186.5" width="41" height="21.5" fill="#f0f0f0" stroke="#c0c4c8" stroke-width="1" rx="1"/>
<text class="t" x="790" y="200.3" style="fill:#8a8a8a">2.5</text>
<!-- buttons -->
<rect x="848.5" y="133.5" width="72" height="20.5" fill="url(#btnb)" stroke="#3c7fb1" stroke-width="1" rx="2.5"/>
<rect x="849.5" y="134.5" width="70" height="18.5" fill="none" stroke="#7ce4fc" stroke-width="1" rx="2"/>
<text class="t" x="884.5" y="148" text-anchor="middle">OK</text>
<rect x="848.5" y="158.5" width="72" height="20.5" fill="url(#btng)" stroke="#707070" stroke-width="1" rx="2.5"/>
<text class="t" x="884.5" y="173" text-anchor="middle">Cancel</text>
<rect x="848.5" y="185.5" width="72" height="20.5" fill="url(#btng)" stroke="#707070" stroke-width="1" rx="2.5"/>
<text class="t" x="884.5" y="200" text-anchor="middle"><tspan text-decoration="underline">A</tspan>pply Now</text>
<!-- cycles -->
<text class="t" x="550.6" y="233"><tspan text-decoration="underline">N</tspan>umber of cycles:</text>
<rect x="649.5" y="219.5" width="47" height="19" fill="#ffffff" stroke="#c8ccd0" stroke-width="1"/>
<text class="t" x="654" y="233">1</text>
<rect x="680.5" y="220.5" width="15" height="8.5" fill="#eef0f2" stroke="#a8b0b8" stroke-width="0.8"/>
<rect x="680.5" y="229" width="15" height="8.5" fill="#eef0f2" stroke="#a8b0b8" stroke-width="0.8"/>
<path d="M685,227 L688,223.5 L691,227 Z M685,231 L688,234.5 L691,231 Z" fill="#4a5a78"/>
<!-- checkboxes -->
<rect x="551.5" y="242.5" width="12" height="12" fill="#f4f4f4" stroke="#8e8f8f" stroke-width="1"/>
<rect x="553.5" y="244.5" width="8" height="8" fill="#d8dce0" stroke="#c0c4c8" stroke-width="1"/>
<path d="M554,248.5 L556.5,252 L561,244.5" fill="none" stroke="#3a4e96" stroke-width="1.5"/>
<text class="t" x="566.8" y="252.5">Conn<tspan text-decoration="underline">e</tspan>ct atoms</text>
<rect x="778.5" y="243" width="12" height="12" fill="#f4f4f4" stroke="#8e8f8f" stroke-width="1"/>
<rect x="780.5" y="245" width="8" height="8" fill="#d8dce0" stroke="#c0c4c8" stroke-width="1"/>
<path d="M781,249 L783.5,252.5 L788,245" fill="none" stroke="#3a4e96" stroke-width="1.5"/>
<rect x="793" y="241.5" width="121" height="14.5" fill="none" stroke="#000" stroke-width="1" stroke-dasharray="1 1"/>
<text class="t" x="794.3" y="253">Create bro<tspan text-decoration="underline">k</tspan>en-off bonds</text>
<!-- separator -->
<line x1="541" y1="261.5" x2="919" y2="261.5" stroke="#a0a0a0" stroke-width="1"/>
<line x1="541" y1="262.5" x2="919" y2="262.5" stroke="#ffffff" stroke-width="1"/>
<text class="t" x="541.2" y="282">Apply <tspan text-decoration="underline">t</tspan>o:</text>
<rect x="589.5" y="267.5" width="235.5" height="20" fill="url(#btng)" stroke="#707070" stroke-width="1" rx="2.5"/>
<text class="t" x="593" y="282">Selected atoms in structure picture</text>
<path d="M813.5,275 L821,275 L817.2,279.5 Z" fill="#000"/>
<rect x="848.5" y="267.5" width="72" height="20" fill="url(#btnb)" stroke="#3c7fb1" stroke-width="1" rx="2.5"/>
<text class="t" x="884.5" y="282" text-anchor="middle">P<tspan text-decoration="underline">u</tspan>mp Now</text>
<text class="t" x="540.8" y="303.6"><tspan text-decoration="underline">C</tspan>entral atom groups/sites:</text>
<text class="t" x="540.8" y="318.6">(Not applicable,</text>
<text class="t" x="540.8" y="331.6">cf. "Apply to")</text>
<text class="t" x="689" y="304"><tspan text-decoration="underline">L</tspan>igand atom groups/sites:</text>
<rect x="689.5" y="308.5" width="137" height="87" fill="#ffffff" stroke="#828790" stroke-width="1"/>
<g>
 <line x1="703.5" y1="322" x2="703.5" y2="347" stroke="#a0a0a0" stroke-dasharray="1 1"/>
 <rect x="699.5" y="314.5" width="8" height="8" fill="#f4f4f4" stroke="#98a0b0"/>
 <path d="M701.5,318.5 L705.5,318.5 M703.5,316.5 L703.5,320.5" stroke="#404a80"/>
 <line x1="708" y1="318.5" x2="713" y2="318.5" stroke="#a0a0a0" stroke-dasharray="1 1"/>
 <rect x="714.5" y="313.5" width="10" height="10" fill="#fff" stroke="#000" stroke-width="1.2"/>
 <path d="M716.5,318 L719,321.5 L723,315.5" fill="none" stroke="#000" stroke-width="2"/>
 <text class="t" x="727.5" y="322.5" style="fill:#000">Sb+3</text>
 <rect x="699.5" y="330.5" width="8" height="8" fill="#f4f4f4" stroke="#98a0b0"/>
 <path d="M701.5,334.5 L705.5,334.5 M703.5,332.5 L703.5,336.5" stroke="#404a80"/>
 <line x1="708" y1="334.5" x2="713" y2="334.5" stroke="#a0a0a0" stroke-dasharray="1 1"/>
 <rect x="714.5" y="329.5" width="10" height="10" fill="#fff" stroke="#000" stroke-width="1.2"/>
 <path d="M716.5,334 L719,337.5 L723,331.5" fill="none" stroke="#000" stroke-width="2"/>
 <text class="t" x="727.5" y="338.5" style="fill:#000">F-1</text>
 <rect x="699.5" y="346.5" width="8" height="8" fill="#f4f4f4" stroke="#98a0b0"/>
 <path d="M701.5,350.5 L705.5,350.5 M703.5,348.5 L703.5,352.5" stroke="#404a80"/>
 <line x1="708" y1="350.5" x2="713" y2="350.5" stroke="#a0a0a0" stroke-dasharray="1 1"/>
 <rect x="714.5" y="345.5" width="10" height="10" fill="#fff" stroke="#000" stroke-width="1.2"/>
 <path d="M716.5,350 L719,353.5 L723,347.5" fill="none" stroke="#000" stroke-width="2"/>
 <text class="t" x="727.5" y="354.5" style="fill:#000">Sb+5</text>
</g>
<rect x="848.5" y="374.5" width="72" height="20" fill="url(#btng)" stroke="#707070" stroke-width="1" rx="2.5"/>
<text class="t" x="884.5" y="389" text-anchor="middle"><tspan text-decoration="underline">S</tspan>hrink Now</text>
</g>
</svg>
</body></html>
